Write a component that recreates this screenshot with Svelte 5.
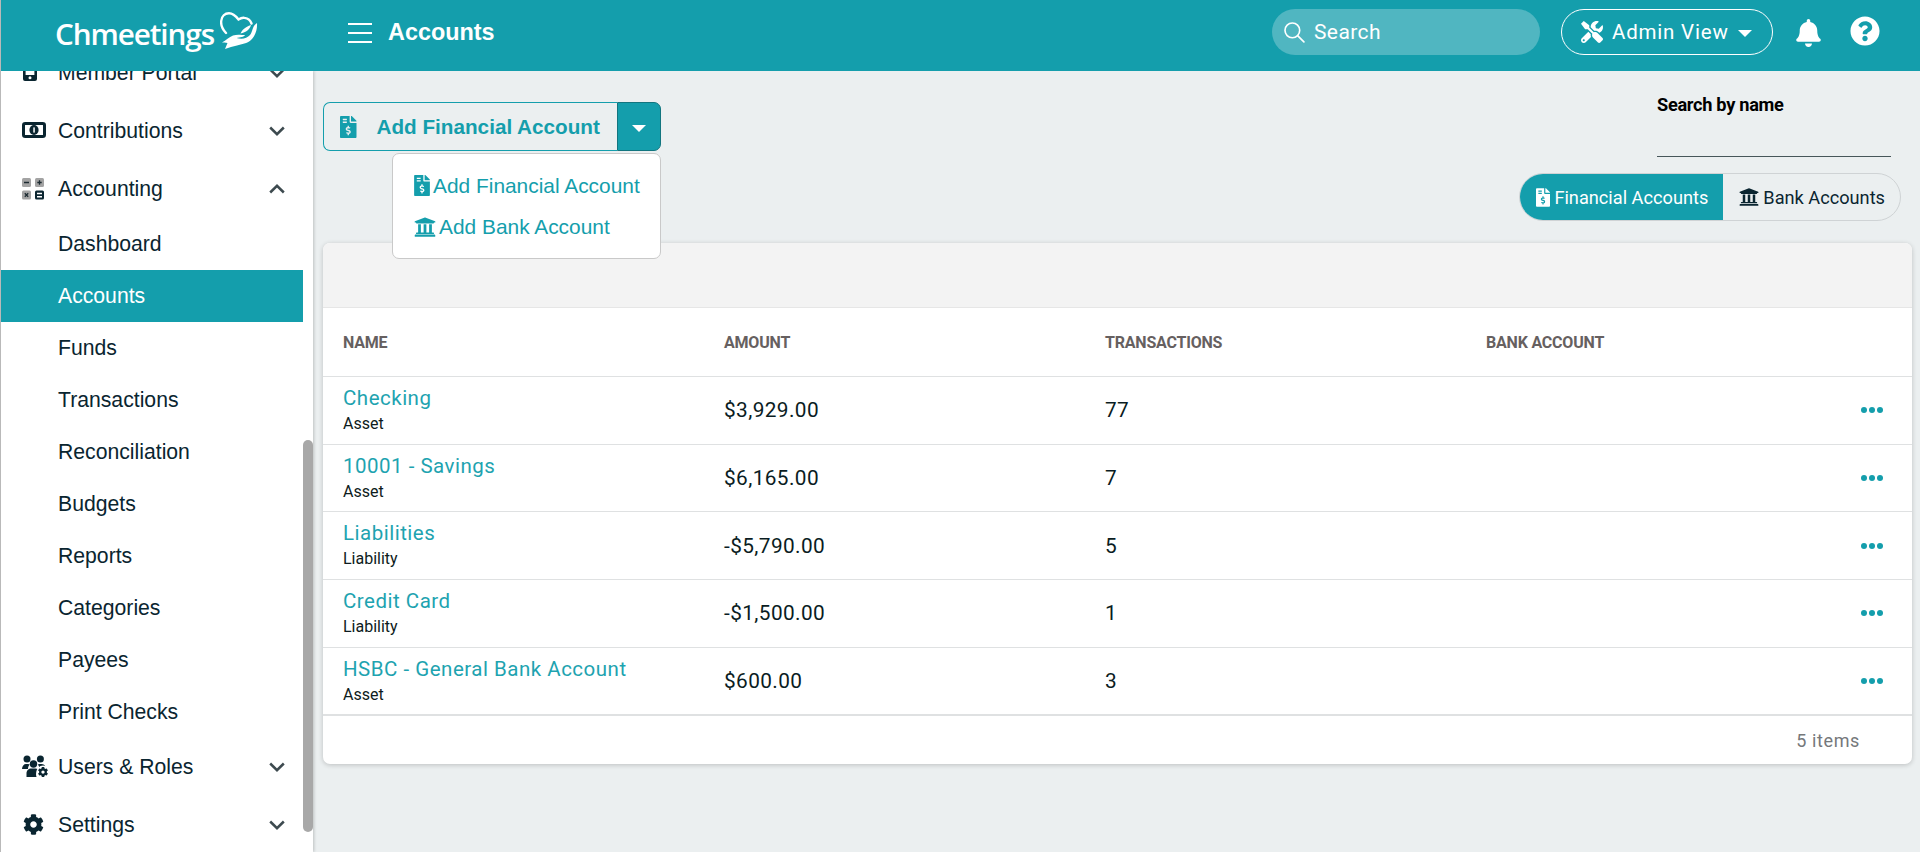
<script lang="ts">
  const filePath = 'M377 105L279.1 7c-4.5-4.5-10.6-7-17-7H256v128h128v-6.1c0-6.3-2.5-12.4-7-16.9zm-153 31V0H24C10.7 0 0 10.7 0 24v464c0 13.3 10.7 24 24 24h336c13.3 0 24-10.7 24-24V160H248c-13.2 0-24-10.8-24-24zM64 72c0-4.42 3.58-8 8-8h80c4.42 0 8 3.58 8 8v16c0 4.42-3.58 8-8 8H72c-4.42 0-8-3.58-8-8V72zm0 80v-16c0-4.42 3.58-8 8-8h80c4.42 0 8 3.58 8 8v16c0 4.42-3.58 8-8 8H72c-4.42 0-8-3.58-8-8zm144 263.88V440c0 4.42-3.58 8-8 8h-16c-4.42 0-8-3.58-8-8v-24.29c-11.29-.58-22.27-4.52-31.37-11.35-3.9-2.93-4.1-8.77-.57-12.14l11.75-11.21c2.77-2.64 6.89-2.76 10.13-.73 3.87 2.42 8.26 3.72 12.82 3.72h28.11c6.5 0 11.8-5.92 11.8-13.19 0-5.95-3.61-11.19-8.77-12.73l-45-13.5c-18.59-5.58-31.58-23.42-31.58-43.39 0-24.52 19.05-44.44 42.67-45.07V232c0-4.42 3.58-8 8-8h16c4.42 0 8 3.58 8 8v24.29c11.29.58 22.27 4.51 31.37 11.35 3.9 2.93 4.1 8.77.57 12.14l-11.75 11.21c-2.77 2.64-6.89 2.76-10.13.73-3.87-2.43-8.26-3.72-12.82-3.72h-28.11c-6.5 0-11.8 5.92-11.8 13.19 0 5.95 3.61 11.19 8.77 12.73l45 13.5c18.59 5.58 31.58 23.42 31.58 43.39 0 24.53-19.05 44.44-42.67 45.07z';
  const bankPath = 'M496 128v16a8 8 0 0 1-8 8h-24v12c0 6.627-5.373 12-12 12H60c-6.627 0-12-5.373-12-12v-12H24a8 8 0 0 1-8-8v-16a8 8 0 0 1 4.941-7.392l232-88a7.996 7.996 0 0 1 6.118 0l232 88A8 8 0 0 1 496 128zm-24 304H40c-13.255 0-24 10.745-24 24v16a8 8 0 0 0 8 8h464a8 8 0 0 0 8-8v-16c0-13.255-10.745-24-24-24zM96 192v192H60c-6.627 0-12 5.373-12 12v20h416v-20c0-6.627-5.373-12-12-12h-36V192h-64v192h-64V192h-64v192h-64V192H96z';
  const cogPath = 'M487.4 315.7l-42.6-24.6c4.3-23.2 4.3-47 0-70.2l42.6-24.6c4.9-2.8 7.1-8.6 5.5-14-11.1-35.6-30-67.8-54.7-94.6-3.8-4.1-10-5.1-14.8-2.3L380.8 110c-17.9-15.4-38.5-27.3-60.8-35.1V25.8c0-5.6-3.9-10.5-9.4-11.7-36.7-8.2-74.3-7.8-109.2 0-5.5 1.2-9.4 6.1-9.4 11.7V75c-22.2 7.9-42.8 19.8-60.8 35.1L88.7 85.5c-4.9-2.8-11-1.9-14.8 2.3-24.7 26.7-43.6 58.9-54.7 94.6-1.7 5.4.6 11.2 5.5 14L67.3 221c-4.3 23.2-4.3 47 0 70.2l-42.6 24.6c-4.9 2.8-7.1 8.6-5.5 14 11.1 35.6 30 67.8 54.7 94.6 3.8 4.1 10 5.1 14.8 2.3l42.6-24.6c17.9 15.4 38.5 27.3 60.8 35.1v49.2c0 5.6 3.9 10.5 9.4 11.7 36.7 8.2 74.3 7.8 109.2 0 5.5-1.2 9.4-6.1 9.4-11.7v-49.2c22.2-7.9 42.8-19.8 60.8-35.1l42.6 24.6c4.9 2.8 11 1.9 14.8-2.3 24.7-26.7 43.6-58.9 54.7-94.6 1.5-5.5-.7-11.3-5.6-14.1zM256 336c-44.1 0-80-35.9-80-80s35.9-80 80-80 80 35.9 80 80-35.9 80-80 80z';
  const toolsPath = 'M501.1 395.7L384 278.6c-23.1-23.1-57.6-27.6-85.4-13.9L192 158.1V96L64 0 0 64l96 128h62.1l106.6 106.6c-13.6 27.8-9.2 62.3 13.9 85.4l117.1 117.1c14.6 14.6 38.2 14.6 52.7 0l52.7-52.7c14.5-14.6 14.5-38.2 0-52.7zM331.7 225c28.3 0 54.9 11 74.9 31l19.4 19.4c15.8-6.9 30.8-16.5 43.8-29.5 37.1-37.1 49.7-89.3 37.9-136.7-2.2-9-13.5-12.1-20.1-5.5l-74.4 74.4-67.9-11.3L334 98.9l74.4-74.4c6.6-6.6 3.4-17.9-5.7-20.2-47.4-11.7-99.6.9-136.6 37.9-28.5 28.5-41.9 66.1-41.2 103.6l82.1 82.1c8.1-1.9 16.5-2.9 24.7-2.9zm-103.9 82l-56.7-56.7L18.7 402.8c-25 25-25 65.5 0 90.5s65.5 25 90.5 0l123.6-123.6c-7.6-19.9-9.9-41.6-5-62.7zM64 472c-13.2 0-24-10.8-24-24 0-13.3 10.7-24 24-24s24 10.7 24 24c0 13.2-10.7 24-24 24z';
  const bellPath = 'M224 512c35.32 0 63.97-28.65 63.97-64H160.03c0 35.35 28.65 64 63.97 64zm215.39-149.71c-19.32-20.76-55.47-51.99-55.47-154.29 0-77.7-54.48-139.9-127.94-155.16V32c0-17.67-14.32-32-31.98-32s-31.98 14.33-31.98 32v20.84C118.56 68.1 64.08 130.3 64.08 208c0 102.3-36.15 133.53-55.47 154.29-6 6.45-8.66 14.16-8.61 21.71.11 16.4 12.98 32 32.1 32h383.8c19.12 0 32-15.6 32.1-32 .05-7.55-2.61-15.27-8.61-21.71z';
  const helpPath = 'M504 256c0 136.997-111.043 248-248 248S8 392.997 8 256C8 119.083 119.043 8 256 8s248 111.083 248 248zM262.655 90c-54.497 0-89.255 22.957-116.549 63.758-3.536 5.286-2.353 12.415 2.715 16.258l34.699 26.31c5.205 3.947 12.621 3.008 16.665-2.122 17.864-22.658 30.113-35.797 57.303-35.797 20.429 0 45.698 13.148 45.698 32.958 0 14.976-12.363 22.667-32.534 33.976C247.128 238.528 216 254.941 216 296v4c0 6.627 5.373 12 12 12h56c6.627 0 12-5.373 12-12v-1.333c0-28.462 83.186-29.647 83.186-106.667 0-58.002-60.165-102-116.531-102zM256 338c-25.365 0-46 20.635-46 46 0 25.364 20.635 46 46 46s46-20.636 46-46c0-25.365-20.635-46-46-46z';

  const subItems = ['Dashboard', 'Accounts', 'Funds', 'Transactions', 'Reconciliation', 'Budgets', 'Reports', 'Categories', 'Payees', 'Print Checks'];

  const accounts = [
    { name: 'Checking', type: 'Asset', amount: '$3,929.00', count: 77 },
    { name: '10001 - Savings', type: 'Asset', amount: '$6,165.00', count: 7 },
    { name: 'Liabilities', type: 'Liability', amount: '-$5,790.00', count: 5 },
    { name: 'Credit Card', type: 'Liability', amount: '-$1,500.00', count: 1 },
    { name: 'HSBC - General Bank Account', type: 'Asset', amount: '$600.00', count: 3 }
  ];
</script>

{#snippet chevron(up = false)}
  <svg class="chevron" viewBox="0 0 16 10" aria-hidden="true">
    <path d={up ? 'M1.2 8.5 8 1.8l6.8 6.7' : 'M1.2 1.5 8 8.2l6.8-6.7'} />
  </svg>
{/snippet}

{#snippet fileIcon(cls)}
  <svg class={cls} viewBox="0 0 384 512" aria-hidden="true"><path d={filePath} /></svg>
{/snippet}

{#snippet bankIcon(cls)}
  <svg class={cls} viewBox="0 0 512 512" aria-hidden="true"><path d={bankPath} /></svg>
{/snippet}

<div class="app">
  <header class="topbar">
    <div class="logo">
      <span class="logo-text">Chmeetings</span>
      <svg class="logo-mark" viewBox="0 0 38 38" aria-hidden="true">
        <path class="heart" d="M6 21C2 17 .8 13 1.2 9 1.600 4 5 1.300 9 1.300c4 0 7 3 9.500 6.200 2-1.300 4-2 6-1.600 3 .5 6 2.600 7 5.600" />
        <path d="M37 11C37.500 17 35.500 24 31 28C27 31.500 22 32 17 33.500C13 34.500 9 35.500 5 37L7.500 31C5.500 30.500 3.500 30.500 2 30.500C6 28.500 9 25 13 23.500C17 22 22 23 25 23C24 25 20 25.500 16.500 26C22 27.500 27 26.500 30 23C33 19.500 32 14 37 11Z" />
        <path d="M31 13C30 17 26 20.500 20.500 21.500C22 18 25 15 31 13Z" />
      </svg>
    </div>
    <button class="menu-btn" aria-label="Toggle menu">
      <span></span><span></span><span></span>
    </button>
    <h1 class="page-title">Accounts</h1>
    <div class="top-actions">
      <div class="top-search">
        <svg viewBox="0 0 20 20" aria-hidden="true"><circle cx="8.5" cy="8.5" r="6.7" /><path d="m13.5 13.5 5.5 5.5" /></svg>
        <span>Search</span>
      </div>
      <button class="view-btn">
        <svg viewBox="0 0 512 512" aria-hidden="true"><path d={toolsPath} /></svg>
        <span>Admin View</span>
        <i class="caret"></i>
      </button>
      <svg class="bell" viewBox="0 0 448 512" aria-hidden="true"><path d={bellPath} /></svg>
      <svg class="help" viewBox="0 0 512 512" aria-hidden="true"><path d={helpPath} /></svg>
    </div>
  </header>

  <div class="layout">
    <aside class="sidebar">
      <nav class="nav">
        <div class="nav-row">
          <svg class="nav-icon portal" viewBox="0 0 14 22" aria-hidden="true">
            <path fill-rule="evenodd" d="M2 0h10a2 2 0 0 1 2 2v18a2 2 0 0 1-2 2H2a2 2 0 0 1-2-2V2a2 2 0 0 1 2-2zm.6 3v13h8.800V3zM7 17.300a1.500 1.500 0 1 0 0 3 1.500 1.500 0 0 0 0-3z" />
          </svg>
          <span>Member Portal</span>
          {@render chevron()}
        </div>
        <div class="nav-row">
          <svg class="nav-icon money" viewBox="0 0 24 16" aria-hidden="true">
            <rect x="1.500" y="1.500" width="21" height="13" rx="1.800" class="money-outline" />
            <ellipse cx="12" cy="8" rx="4.600" ry="5" />
            <rect x="11.300" y="5.400" width="1.500" height="5.200" fill="#fff" />
          </svg>
          <span>Contributions</span>
          {@render chevron()}
        </div>
        <div class="nav-row">
          <svg class="nav-icon calc" viewBox="0 0 22 22" aria-hidden="true">
            <rect width="9" height="9" rx="1.500" fill="#a3a3a3" />
            <rect x="13" width="9" height="9" rx="1.500" fill="#a3a3a3" />
            <rect y="12.500" width="9" height="9" rx="1.500" fill="#a3a3a3" />
            <rect x="13" y="12.500" width="9" height="9" rx="1.500" />
            <path class="calc-mark" d="M2 4.500h5M15.300 4.500h4.400M17.500 2.300v4.400M2.800 15.200l3.400 3.600M6.200 15.200l-3.400 3.600" />
            <path class="calc-eq" d="M15 15.500h5M15 18.800h5" />
          </svg>
          <span>Accounting</span>
          {@render chevron(true)}
        </div>
        {#each subItems as item}
          <div class="sub-row" class:active={item === 'Accounts'}>{item}</div>
        {/each}
        <div class="nav-row">
          <svg class="nav-icon users" viewBox="0 0 26 22" aria-hidden="true">
            <circle cx="5" cy="4" r="3.500" />
            <circle cx="18.400" cy="4" r="3.500" />
            <circle cx="11.500" cy="9" r="3.700" />
            <path d="M0 14c0-3 2-5 4-5h2c.8 0 1.300.2 1.800.6C6.500 10.800 6 12.300 6 14z" />
            <path d="M23.500 12c-.5-2-2-3-4-3h-2c-.8 0-1.300.2-1.800.6 .8.800 1.300 1.700 1.600 2.700z" />
            <path d="M4.500 22v-3.500c0-3 2-5 5-5h4c1 0 1.800.3 2.500.8-2 2.200-2.500 5-1.500 7.700z" />
            <circle cx="21" cy="17" r="6.500" fill="#fff" />
            <svg x="15.800" y="11.800" width="10.400" height="10.400" viewBox="0 0 512 512"><path d={cogPath} /></svg>
          </svg>
          <span>Users &amp; Roles</span>
          {@render chevron()}
        </div>
        <div class="nav-row">
          <svg class="nav-icon cog" viewBox="0 0 512 512" aria-hidden="true"><path d={cogPath} /></svg>
          <span>Settings</span>
          {@render chevron()}
        </div>
      </nav>
      <div class="scroll-thumb"></div>
    </aside>

    <main class="content">
      <div class="toolbar">
        <div class="split">
          <button class="split-main">
            {@render fileIcon('split-icon')}
            <span>Add Financial Account</span>
          </button>
          <button class="split-caret" aria-label="More options"><i class="caret"></i></button>
          <div class="dropdown">
            <div class="drop-item">
              {@render fileIcon('drop-file')}
              <span>Add Financial Account</span>
            </div>
            <div class="drop-item">
              {@render bankIcon('drop-bank')}
              <span>Add Bank Account</span>
            </div>
          </div>
        </div>
        <div class="filters">
          <div class="name-search">
            <label for="name-search">Search by name</label>
            <input id="name-search" type="text" />
          </div>
          <div class="toggle">
            <button class="toggle-btn selected">
              {@render fileIcon('toggle-file')}
              <span>Financial Accounts</span>
            </button>
            <button class="toggle-btn">
              {@render bankIcon('toggle-bank')}
              <span>Bank Accounts</span>
            </button>
          </div>
        </div>
      </div>

      <section class="card">
        <div class="card-head"></div>
        <div class="grid-row grid-header">
          <div>NAME</div>
          <div>AMOUNT</div>
          <div>TRANSACTIONS</div>
          <div>BANK ACCOUNT</div>
          <div></div>
        </div>
        {#each accounts as acc}
          <div class="grid-row account">
            <div>
              <div class="acc-name">{acc.name}</div>
              <div class="acc-type">{acc.type}</div>
            </div>
            <div class="cell">{acc.amount}</div>
            <div class="cell">{acc.count}</div>
            <div></div>
            <div class="dots"><i></i><i></i><i></i></div>
          </div>
        {/each}
        <div class="card-foot">5 items</div>
      </section>
    </main>
  </div>
</div>

<style>
  :global(body) {
    margin: 0;
    background: #ebeff0;
    font-family: 'Liberation Sans', Arial, sans-serif;
    overflow: hidden;
  }
  button {
    font: inherit;
    cursor: pointer;
  }
  .app {
    height: 852px;
    display: flex;
    flex-direction: column;
    border-left: 1px solid #b9b9b9;
    box-sizing: border-box;
    overflow: hidden;
  }

  /* top bar */
  .topbar {
    height: 71px;
    flex: none;
    background: #149eac;
    color: #fff;
    display: flex;
    align-items: center;
    position: relative;
    z-index: 3;
  }
  .logo {
    width: 347px;
    padding-left: 54px;
    box-sizing: border-box;
    display: flex;
    align-items: center;
    flex: none;
  }
  .logo-text {
    font-family: 'Open Sans', sans-serif;
    font-size: 29.7px;
    font-weight: 600;
    letter-spacing: -1.1px;
    margin-top: -4px;
  }
  .logo-mark {
    width: 38px;
    height: 38px;
    margin-left: 6px;
    margin-top: -10px;
    fill: #fff;
  }
  .logo-mark .heart {
    fill: none;
    stroke: #fff;
    stroke-width: 2.4;
    stroke-linecap: round;
  }
  .menu-btn {
    width: 24px;
    height: 20px;
    padding: 0;
    border: 0;
    background: none;
    display: flex;
    flex-direction: column;
    justify-content: space-between;
    margin-top: -6px;
  }
  .menu-btn span {
    height: 2px;
    background: #fff;
  }
  .page-title {
    margin: -6px 0 0 16px;
    font-size: 23.4px;
    font-weight: 700;
  }
  .top-actions {
    margin-left: auto;
    display: flex;
    align-items: center;
    padding: 0 40px 4px 0;
  }
  .top-search {
    width: 268px;
    height: 46px;
    border-radius: 23px;
    background: #50b6c1;
    box-sizing: border-box;
    padding-left: 11px;
    display: flex;
    align-items: center;
    gap: 9px;
    font: 21px Roboto, sans-serif;
    letter-spacing: 0.4px;
    margin-top: -3px;
  }
  .top-search svg {
    width: 22px;
    height: 22px;
    fill: none;
    stroke: #fff;
    stroke-width: 1.5;
    stroke-linecap: round;
  }
  .view-btn {
    width: 212px;
    height: 46px;
    margin: -3px 0 0 21px;
    border: 1px solid #fff;
    border-radius: 23px;
    background: none;
    color: #fff;
    display: flex;
    align-items: center;
    gap: 9px;
    font: 20.5px Roboto, sans-serif;
    letter-spacing: 0.8px;
    padding: 0 0 0 19px;
  }
  .view-btn svg {
    width: 22px;
    height: 22px;
    fill: #fff;
  }
  .caret {
    display: inline-block;
    width: 0;
    height: 0;
    border-left: 7px solid transparent;
    border-right: 7px solid transparent;
    border-top: 7px solid #fff;
  }
  .view-btn .caret {
    margin-top: 2px;
  }
  .bell {
    width: 25px;
    height: 28px;
    margin: -2px 0 0 23px;
    fill: #fff;
  }
  .help {
    width: 30px;
    height: 30px;
    margin: -6px 0 0 29px;
    fill: #fff;
  }

  /* sidebar */
  .layout {
    flex: 1;
    display: flex;
    min-height: 0;
  }
  .sidebar {
    width: 312px;
    flex: none;
    background: #fff;
    box-shadow: 1px 0 3px rgba(0, 0, 0, 0.2);
    position: relative;
    overflow: hidden;
    z-index: 2;
  }
  .nav {
    margin-top: -27px;
    width: 302px;
    color: #0a2530;
    font-size: 21.2px;
  }
  .nav-row {
    height: 58px;
    display: flex;
    align-items: center;
    padding-left: 57px;
    position: relative;
  }
  .nav-icon {
    position: absolute;
    fill: #0a2530;
  }
  .portal { left: 22px; top: 15px; width: 14px; height: 22px; }
  .money { left: 21px; top: 20px; width: 24px; height: 16px; }
  .money-outline { fill: none; stroke: #0a2530; stroke-width: 3; }
  .calc { left: 21px; top: 18px; width: 22px; height: 22px; }
  .calc-mark { fill: none; stroke: #1c2a30; stroke-width: 1.3; }
  .calc-eq { fill: none; stroke: #fff; stroke-width: 1.5; }
  .users { left: 21px; top: 17px; width: 26px; height: 22px; }
  .cog { left: 22px; top: 18px; width: 21px; height: 21px; }
  .chevron {
    width: 16px;
    height: 10px;
    position: absolute;
    left: 268px;
    top: 24px;
    fill: none;
    stroke: #3d4a4f;
    stroke-width: 2.5;
  }
  .sub-row {
    height: 52px;
    display: flex;
    align-items: center;
    padding-left: 57px;
  }
  .sub-row.active {
    background: #149eac;
    color: #fff;
  }
  .scroll-thumb {
    position: absolute;
    right: 0;
    top: 369px;
    width: 10px;
    height: 392px;
    border-radius: 5px;
    background: #a8a8a8;
  }

  /* content */
  .content {
    flex: 1;
    min-width: 0;
    padding: 0 8px 0 10px;
  }
  .toolbar {
    height: 172px;
    display: flex;
    justify-content: space-between;
    align-items: flex-start;
  }
  .split {
    display: flex;
    position: relative;
    margin-top: 31px;
    height: 49px;
  }
  .split-main {
    width: 294px;
    border: 1px solid #149eac;
    border-right: 0;
    border-radius: 7px 0 0 7px;
    background: none;
    color: #149eac;
    font-weight: 700;
    font-size: 20.7px;
    padding: 0 0 0 16px;
    display: flex;
    align-items: center;
    gap: 20px;
  }
  .split-icon {
    width: 16.5px;
    height: 22px;
    fill: #149eac;
  }
  .split-caret {
    width: 44px;
    border: 1px solid #12757f;
    border-radius: 0 7px 7px 0;
    background: #149eac;
    padding: 0;
  }
  .dropdown {
    position: absolute;
    top: 51px;
    left: 69px;
    width: 269px;
    height: 106px;
    box-sizing: border-box;
    background: #fff;
    border: 1px solid #c9c9c9;
    border-radius: 7px;
    padding: 11px 0 0 21px;
    z-index: 4;
    color: #149eac;
    font-size: 20.9px;
  }
  .drop-item {
    height: 41px;
    display: flex;
    align-items: center;
  }
  .drop-file {
    width: 16px;
    height: 21px;
    fill: #149eac;
    margin-right: 3px;
  }
  .drop-bank {
    width: 22px;
    height: 22px;
    fill: #149eac;
    margin-right: 3px;
  }
  .filters {
    display: flex;
    flex-direction: column;
    align-items: flex-end;
  }
  .name-search {
    width: 234px;
    margin: 23px 21px 0 0;
    display: flex;
    flex-direction: column;
  }
  .name-search label {
    font: 700 18.2px Roboto, sans-serif;
    letter-spacing: -0.3px;
    color: #000;
    line-height: 22px;
  }
  .name-search input {
    height: 40px;
    border: 0;
    border-bottom: 1px solid #47565a;
    background: none;
    padding: 0;
    outline: none;
  }
  .toggle {
    margin-top: 16px;
    margin-right: 11px;
    height: 48px;
    display: flex;
    border: 1px solid #cfd3d5;
    border-radius: 24px;
    overflow: hidden;
    box-sizing: border-box;
  }
  .toggle-btn {
    border: 0;
    background: none;
    color: #0a2530;
    display: flex;
    align-items: center;
    font: 18.2px Roboto, sans-serif;
    padding: 0 15px 0 16px;
  }
  .toggle-btn.selected {
    background: #149eac;
    color: #fff;
  }
  .toggle-file {
    width: 14px;
    height: 19px;
    fill: #fff;
    margin-right: 4px;
  }
  .toggle-bank {
    width: 20px;
    height: 20px;
    fill: #0a2530;
    margin-right: 4px;
  }

  /* table card */
  .card {
    background: #fff;
    border-radius: 7px;
    box-shadow: 0 1px 5px rgba(0, 0, 0, 0.2);
    overflow: hidden;
  }
  .card-head {
    height: 64px;
    background: #f3f3f3;
  }
  .grid-row {
    display: grid;
    grid-template-columns: 381px 381px 381px 1fr 51px;
    padding-left: 20px;
    align-items: center;
    border-bottom: 1px solid #dfe1e2;
    box-sizing: border-box;
  }
  .grid-header {
    height: 70px;
    border-top: 1px solid #e6e6e6;
    font: 700 16px Roboto, sans-serif;
    letter-spacing: -0.2px;
    color: #666060;
  }
  .account {
    height: 67.7px;
  }
  .acc-name {
    font: 20.5px Roboto, sans-serif;
    letter-spacing: 0.5px;
    color: #1ea3b0;
    margin-top: -2px;
  }
  .acc-type {
    font: 16px Roboto, sans-serif;
    color: #0d1b20;
    margin-top: 4px;
  }
  .cell {
    font: 20.8px Roboto, sans-serif;
    letter-spacing: 0.4px;
    color: #0a1c22;
  }
  .dots {
    display: flex;
    gap: 2px;
  }
  .dots i {
    width: 6px;
    height: 6px;
    border-radius: 50%;
    background: #149eac;
  }
  .card-foot {
    height: 48px;
    border-top: 1px solid #dfe1e2;
    display: flex;
    align-items: center;
    justify-content: flex-end;
    padding-right: 52px;
    font: 18px Roboto, sans-serif;
    letter-spacing: 0.6px;
    color: #75787b;
  }
</style>
